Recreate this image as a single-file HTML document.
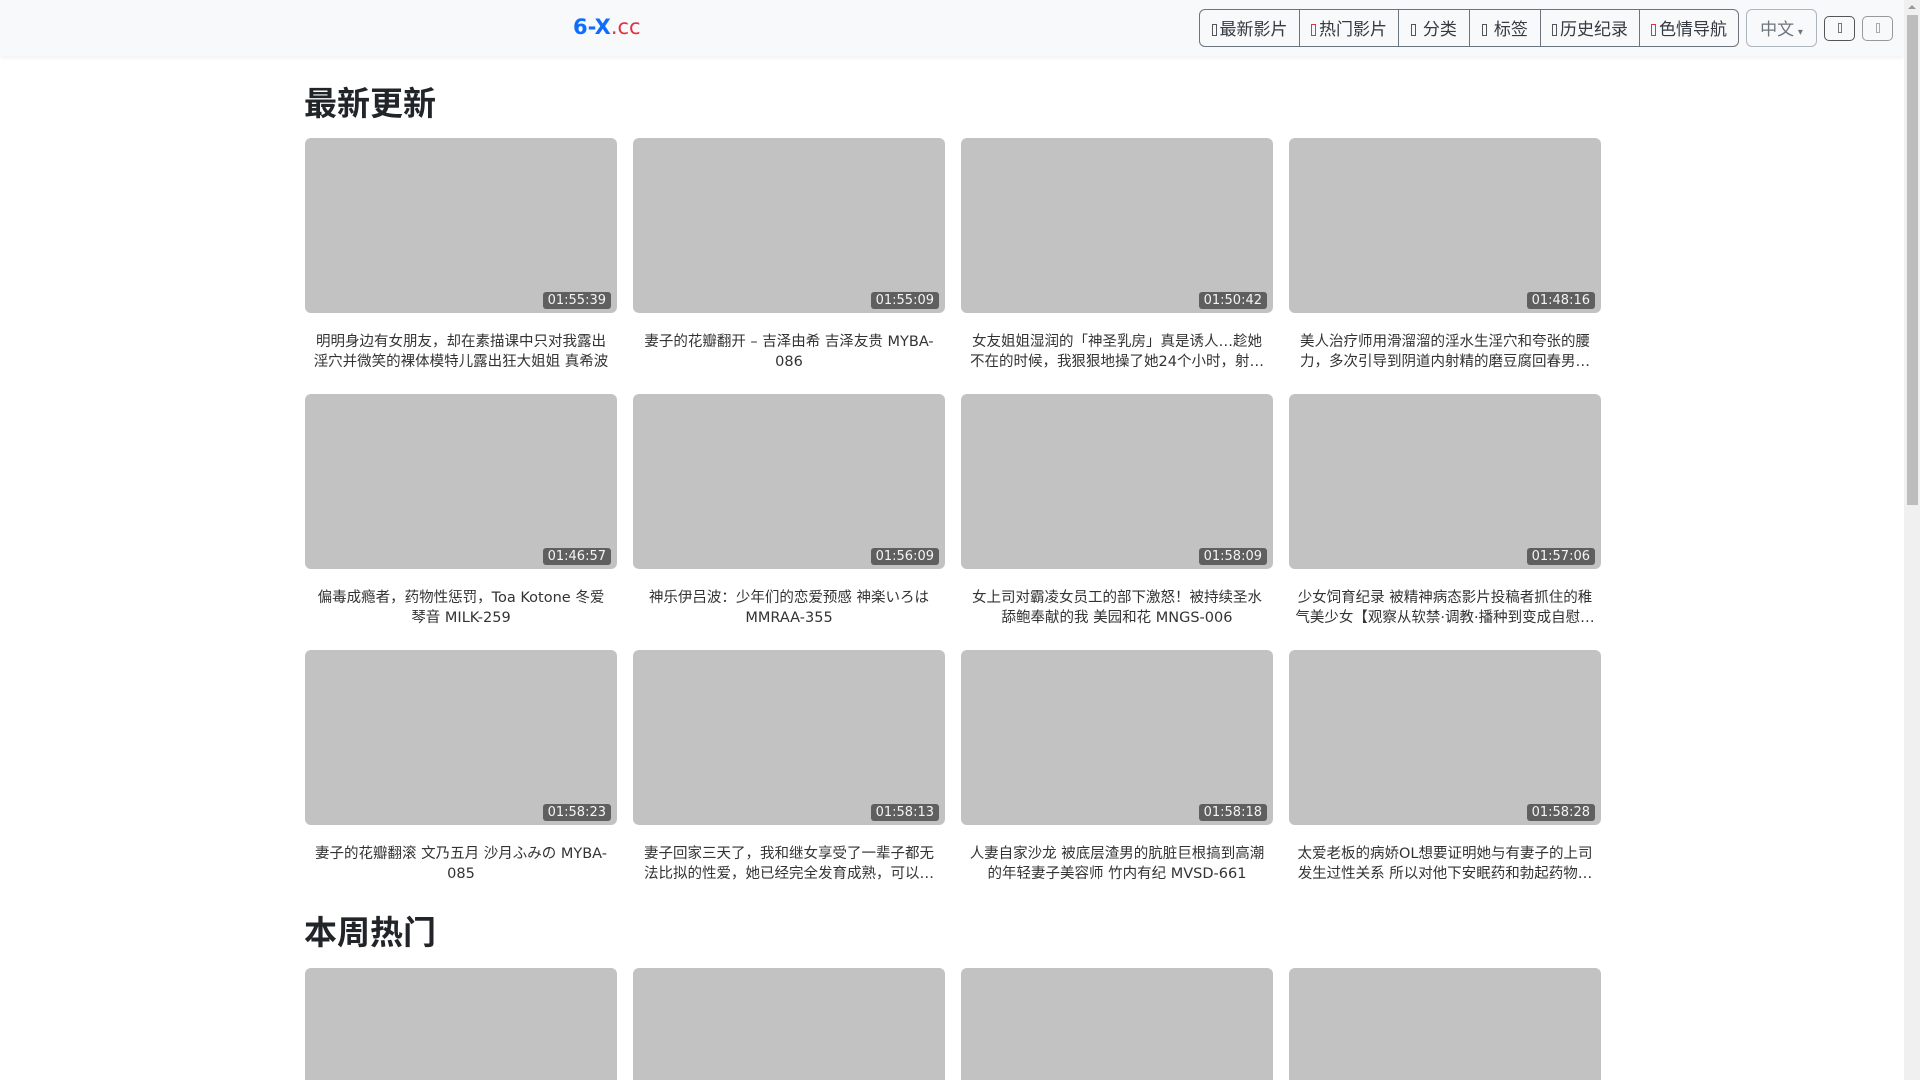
<!DOCTYPE html>
<html style="overflow:hidden;height:1080px"><head><meta charset="utf-8"><style>
*{box-sizing:border-box;margin:0;padding:0}
body{width:1920px;height:1080px;overflow:hidden;background:#fff;font-family:"Liberation Sans","Noto Sans CJK SC",sans-serif;color:#212529;position:relative}
.nav{position:absolute;left:0;top:0;width:1904px;height:56px;background:#f8f9fa;box-shadow:0 2px 4px rgba(0,0,0,.06)}
.logo{position:absolute;left:573px;top:15px;font-size:21px;font-weight:bold;color:#0d6efd;font-family:"DejaVu Sans",sans-serif}
.logo span{color:#dc3545;font-weight:normal}
.grp{position:absolute;top:9px;height:38px;left:1199px;display:flex;border:1px solid #6c757d;border-radius:6px;overflow:hidden}
.grp div{height:36px;line-height:36px;font-size:17px;color:#343a40;text-align:center;border-left:1px solid #6c757d;white-space:nowrap;font-family:"Noto Sans CJK SC",sans-serif}
.grp div:first-child{border-left:none}
.ic{display:inline-block;width:5px;height:12px;border:1px solid #555;margin-right:3px;vertical-align:-1px}
.r{border-color:#dc3545}
.lang{position:absolute;left:1746px;top:9px;width:71px;height:38px;border:1px solid #adb5bd;border-radius:6px;color:#6c757d;font-size:17px;line-height:36px;text-align:center;font-family:"Noto Sans CJK SC",sans-serif}
.sb{position:absolute;top:16px;width:31px;height:25px;border:1px solid #555;border-radius:5px;text-align:center}
.sb i{display:inline-block;width:4px;height:10px;border:1px solid #777;margin-top:6px}
.scr{position:absolute;left:1904px;top:0;width:16px;height:1080px;background:#f0f0f0}
.thumbbar{position:absolute;left:3px;top:15px;width:11px;height:490px;background:#bdbdbd}
.arr{position:absolute;left:4px;top:5px;border-left:4px solid transparent;border-right:4px solid transparent;border-bottom:4px solid #999}
h2{position:absolute;left:304px;font-size:33px;font-weight:bold;color:#212529;font-family:"Noto Sans CJK SC",sans-serif;line-height:40px}
.card{position:absolute;width:312px}
.th{height:175px;background:#c2c2c2;border-radius:6px;position:relative}
.d{position:absolute;right:6px;bottom:4px;background:#5f5f5f;color:#f4f4f4;font-size:13px;font-family:"DejaVu Sans",sans-serif;height:17px;line-height:17px;padding:0 5px;border-radius:3px}
.t{margin-top:19px;padding:0 6px;font-size:14.5px;line-height:20px;text-align:center;color:#333;height:40px;overflow:hidden;display:-webkit-box;-webkit-line-clamp:2;-webkit-box-orient:vertical;font-family:"DejaVu Sans","Noto Sans CJK SC",sans-serif}
</style></head><body>
<div class="nav">
<div class="logo">6-X<span>.cc</span></div>
<div class="grp">
<div style="width:99px"><i class="ic"></i>最新影片</div>
<div style="width:99px"><i class="ic r"></i>热门影片</div>
<div style="width:71px"><i class="ic"></i> 分类</div>
<div style="width:71px"><i class="ic"></i> 标签</div>
<div style="width:99px"><i class="ic"></i>历史纪录</div>
<div style="width:99px"><i class="ic r"></i>色情导航</div>
</div>
<div class="lang">中文 <span style="font-size:10px">▾</span></div>
<div class="sb" style="left:1824px"><i></i></div>
<div class="sb" style="left:1862px;border-color:#999"><i style="border-color:#aaa"></i></div>
</div>
<div class="scr"><div class="arr"></div><div class="thumbbar"></div></div>

<h2 style="top:81px">最新更新</h2>

<div class="card" style="left:305px;top:138px"><div class="th"><span class="d">01:55:39</span></div><div class="t">明明身边有女朋友，却在素描课中只对我露出淫穴并微笑的裸体模特儿露出狂大姐姐 真希波</div></div>
<div class="card" style="left:633px;top:138px"><div class="th"><span class="d">01:55:09</span></div><div class="t">妻子的花瓣翻开 – 吉泽由希 吉泽友贵 MYBA-086</div></div>
<div class="card" style="left:961px;top:138px"><div class="th"><span class="d">01:50:42</span></div><div class="t">女友姐姐湿润的「神圣乳房」真是诱人…趁她不在的时候，我狠狠地操了她24个小时，射精多次</div></div>
<div class="card" style="left:1289px;top:138px"><div class="th"><span class="d">01:48:16</span></div><div class="t">美人治疗师用滑溜溜的淫水生淫穴和夸张的腰力，多次引导到阴道内射精的磨豆腐回春男性按摩</div></div>

<div class="card" style="left:305px;top:394px"><div class="th"><span class="d">01:46:57</span></div><div class="t">偏毒成瘾者，药物性惩罚，Toa Kotone 冬爱琴音 MILK-259</div></div>
<div class="card" style="left:633px;top:394px"><div class="th"><span class="d">01:56:09</span></div><div class="t">神乐伊吕波：少年们的恋爱预感 神楽いろは MMRAA-355</div></div>
<div class="card" style="left:961px;top:394px"><div class="th"><span class="d">01:58:09</span></div><div class="t">女上司对霸凌女员工的部下激怒！被持续圣水舔鲍奉献的我 美园和花 MNGS-006</div></div>
<div class="card" style="left:1289px;top:394px"><div class="th"><span class="d">01:57:06</span></div><div class="t">少女饲育纪录 被精神病态影片投稿者抓住的稚气美少女【观察从软禁·调教·播种到变成自慰人偶】</div></div>

<div class="card" style="left:305px;top:650px"><div class="th"><span class="d">01:58:23</span></div><div class="t">妻子的花瓣翻滚 文乃五月 沙月ふみの MYBA-085</div></div>
<div class="card" style="left:633px;top:650px"><div class="th"><span class="d">01:58:13</span></div><div class="t">妻子回家三天了，我和继女享受了一辈子都无法比拟的性爱，她已经完全发育成熟，可以生孩子了</div></div>
<div class="card" style="left:961px;top:650px"><div class="th"><span class="d">01:58:18</span></div><div class="t">人妻自家沙龙 被底层渣男的肮脏巨根搞到高潮的年轻妻子美容师 竹内有纪 MVSD-661</div></div>
<div class="card" style="left:1289px;top:650px"><div class="th"><span class="d">01:58:28</span></div><div class="t">太爱老板的病娇OL想要证明她与有妻子的上司发生过性关系 所以对他下安眠药和勃起药物并侵犯</div></div>

<h2 style="top:910px">本周热门</h2>
<div class="card" style="left:305px;top:968px"><div class="th" style="height:112px;border-radius:6px 6px 0 0"></div></div>
<div class="card" style="left:633px;top:968px"><div class="th" style="height:112px;border-radius:6px 6px 0 0"></div></div>
<div class="card" style="left:961px;top:968px"><div class="th" style="height:112px;border-radius:6px 6px 0 0"></div></div>
<div class="card" style="left:1289px;top:968px"><div class="th" style="height:112px;border-radius:6px 6px 0 0"></div></div>
</body></html>
